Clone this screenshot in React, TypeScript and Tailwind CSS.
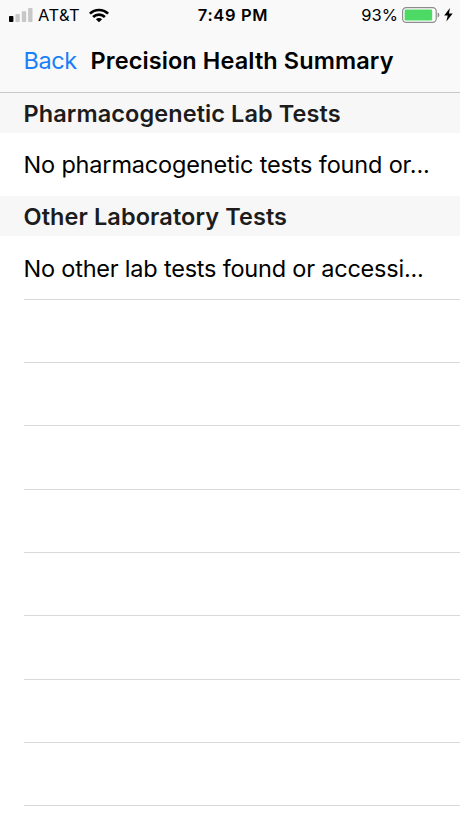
import type { ReactNode } from "react";

const sections = [
  { title: "Pharmacogenetic Lab Tests", message: "No pharmacogenetic tests found or...", last: false },
  { title: "Other Laboratory Tests", message: "No other lab tests found or accessi...", last: true },
];

function SignalIcon() {
  return (
    <svg width="25" height="16" viewBox="0 0 25 16">
      <rect x="0" y="9" width="4.4" height="6" rx="0.8" fill="#000" />
      <rect x="6.4" y="7" width="4.4" height="8" rx="0.8" fill="#c8c8c8" />
      <rect x="12.8" y="4.2" width="4.4" height="10.8" rx="0.8" fill="#c8c8c8" />
      <rect x="19.1" y="1" width="4.4" height="14" rx="0.8" fill="#c8c8c8" />
    </svg>
  );
}

function WifiIcon() {
  return (
    <svg width="20" height="15" viewBox="0 0 20 15" fill="none" stroke="#000" strokeWidth="2.6">
      <path d="M0.9 5.7a12.9 12.9 0 0 1 18.2 0" />
      <path d="M4.1 9a8.4 8.4 0 0 1 11.8 0" />
      <path d="M10 14.3l-3.1-3.1a4.4 4.4 0 0 1 6.2 0z" fill="#000" stroke="none" />
    </svg>
  );
}

function BatteryIcon() {
  return (
    <svg width="38" height="16" viewBox="0 0 38 16">
      <rect x="0.6" y="0.6" width="33.6" height="14.8" rx="3.6" fill="#fff" stroke="#8c8c8c" strokeWidth="1.2" />
      <rect x="2.6" y="2.6" width="27.6" height="10.8" rx="1.2" fill="#4cd964" />
      <path d="M35.6 5.2q1.8 1 1.8 2.8t-1.8 2.8z" fill="#8c8c8c" />
    </svg>
  );
}

function BoltIcon() {
  return (
    <svg width="9" height="14" viewBox="0 0 9 14">
      <path d="M5.9 0L0.2 7.6h3.5L2.4 13.6L8.7 5.6H5z" fill="#000" />
    </svg>
  );
}

function SectionHeader({ children }: { children: ReactNode }) {
  return (
    <h2 className="h-10 bg-[#f7f7f7] pl-[23.5px] text-[23.5px] leading-[41px] font-semibold tracking-[0.09px] whitespace-nowrap text-[#1c1c1c]">
      {children}
    </h2>
  );
}

export default function App() {
  return (
    <div className="h-[818px] w-[460px] overflow-hidden bg-white font-['Inter',sans-serif] text-black">
      <header className="h-[93px] border-b border-[#c8c8c8] bg-[#f9f9f9]">
        <div className="grid h-[30px] grid-cols-[1fr_auto_1fr] items-center text-[16.5px] leading-[30px]">
          <div className="flex items-center pl-[9px]">
            <SignalIcon />
            <span className="ml-1 w-[50.5px] tracking-[0.4px] whitespace-nowrap">AT&amp;T</span>
            <WifiIcon />
          </div>
          <span className="pl-[6px] font-semibold tracking-[0.65px] whitespace-nowrap">7:49 PM</span>
          <div className="flex items-center justify-end pr-[7px]">
            <span className="mr-1 whitespace-nowrap">93%</span>
            <BatteryIcon />
            <span className="ml-1">
              <BoltIcon />
            </span>
          </div>
        </div>
        <nav className="flex h-[62px] items-center pl-[23.5px] text-[23.5px] whitespace-nowrap">
          <a className="w-[67px] tracking-[-0.45px] text-[#1a80f8]">Back</a>
          <h1 className="font-semibold tracking-[0.1px]">Precision Health Summary</h1>
        </nav>
      </header>

      <main>
        {sections.map((section) => (
          <section key={section.title}>
            <SectionHeader>{section.title}</SectionHeader>
            <div className="h-[63.3px] pl-[23.5px]">
              <p
                className={
                  section.last
                    ? "h-full border-b border-[#d9d9dc] text-[23.5px] leading-[65px] tracking-[-0.21px] whitespace-nowrap"
                    : "h-full text-[23.5px] leading-[64px] tracking-[-0.17px] whitespace-nowrap"
                }
              >
                {section.message}
              </p>
            </div>
          </section>
        ))}
        {Array.from({ length: 8 }, (_, i) => (
          <div key={i} className="h-[63.35px] pl-[23.5px]">
            <div className="h-full border-b border-[#d9d9dc]" />
          </div>
        ))}
      </main>
    </div>
  );
}
